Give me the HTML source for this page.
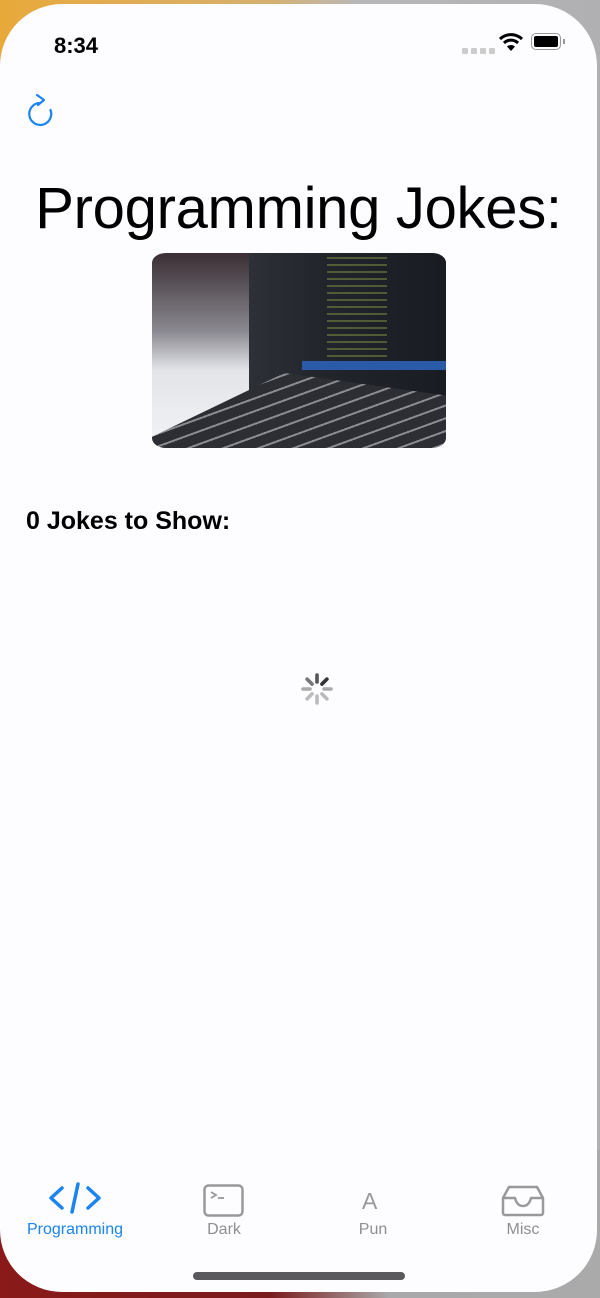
<!DOCTYPE html>
<html><head><style>
html,body{margin:0;padding:0;width:600px;height:1298px;overflow:hidden;font-family:"Liberation Sans",sans-serif}
body{background:linear-gradient(90deg,#e8a93a 0%,#d6b070 45%,#b8b8ba 60%,#b0b0b2 100%);position:relative}
.bot{position:absolute;left:0;top:1150px;width:600px;height:148px;background:linear-gradient(90deg,#8a1a1a 0%,#7a1c1c 45%,#a9a9ab 65%,#aaaaaa 100%)}
.phone{position:absolute;left:0;top:4px;width:597px;height:1288px;background:#fdfcff;border-radius:62px;overflow:hidden}
.time{position:absolute;left:54px;top:29px;font-size:22px;font-weight:bold;color:#000}
.title{position:absolute;left:0;width:597px;top:171px;text-align:center;font-size:58px;color:#000;letter-spacing:-0.3px}
.img{position:absolute;left:152px;top:249px;width:294px;height:195px;border-radius:14px/10px;overflow:hidden;background:linear-gradient(180deg,#3a2e34 0%,#8a8890 40%,#e2e4e8 60%,#f2f3f5 100%)}
.scr{position:absolute;left:97px;top:0;width:197px;height:150px;background:linear-gradient(90deg,#2e3038 0%,#22242c 40%,#1a1c24 100%)}
.kb{position:absolute;left:0;bottom:0;width:294px;height:75px;background:repeating-linear-gradient(160deg,#2c2e34 0 10px,#8a8c92 10px 12px);clip-path:polygon(0 85%,45% 0,100% 30%,100% 100%,0 100%)}
.h{position:absolute;left:26px;top:503px;font-size:25px;font-weight:bold;color:#000}
.tab{position:absolute;top:1217px;font-size:16px;color:#8e8e93;text-align:center;width:120px}
.home{position:absolute;left:193px;top:1268px;width:212px;height:8px;border-radius:4px;background:#5a5a5e}
</style></head><body>
<div class="bot"></div>
<div class="phone">
<div class="time">8:34</div>
<div style="position:absolute;left:462px;top:44px;width:36px;height:6px;display:flex;gap:3px"><span style="width:6px;height:6px;background:#ccc;border-radius:1px"></span><span style="width:6px;height:6px;background:#ccc;border-radius:1px"></span><span style="width:6px;height:6px;background:#ccc;border-radius:1px"></span><span style="width:6px;height:6px;background:#ccc;border-radius:1px"></span></div>
<svg style="position:absolute;left:498px;top:28px" width="26" height="20" viewBox="0 0 26 20"><path d="M2 7 A16 16 0 0 1 24 7" stroke="#000" stroke-width="3" fill="none"/><path d="M6 11 A10 10 0 0 1 20 11" stroke="#000" stroke-width="3" fill="none"/><path d="M13 19 L9 14.5 A6 6 0 0 1 17 14.5Z" fill="#000"/></svg>
<div style="position:absolute;left:531px;top:29px;width:30px;height:17px;border:1.5px solid #999;border-radius:5px;box-sizing:border-box;padding:2px"><div style="background:#000;width:100%;height:100%;border-radius:2px"></div></div>
<div style="position:absolute;left:563px;top:35px;width:2px;height:5px;background:#999"></div>
<svg style="position:absolute;left:24px;top:86px" width="36" height="40" viewBox="0 0 36 40"><path d="M20 14 A11 11 0 1 1 8 16" stroke="#1a84f0" stroke-width="2.2" fill="none" transform="rotate(40 16 25)"/><path d="M13 5 L20 10 L14 15" stroke="#1a84f0" stroke-width="2.2" fill="none" stroke-linecap="round" stroke-linejoin="round"/></svg>
<div class="title">Programming Jokes:</div>
<div class="img"><div class="scr"></div><div style="position:absolute;left:175px;top:4px;width:60px;height:100px;background:repeating-linear-gradient(180deg,#7a8a40 0 2px,transparent 2px 7px);opacity:.55"></div><div style="position:absolute;left:150px;top:108px;width:144px;height:9px;background:#2a5aa8"></div><div class="kb"></div></div>
<div class="h">0 Jokes to Show:</div>
<svg style="position:absolute;left:299px;top:667px" width="36" height="36" viewBox="-18 -18 36 36">
<g stroke-width="3.6" stroke-linecap="round">
<line x1="0" y1="-7" x2="0" y2="-14" stroke="#555" transform="rotate(0)"/>
<line x1="0" y1="-7" x2="0" y2="-14" stroke="#333" transform="rotate(45)"/>
<line x1="0" y1="-7" x2="0" y2="-14" stroke="#aaa" transform="rotate(90)"/>
<line x1="0" y1="-7" x2="0" y2="-14" stroke="#bbb" transform="rotate(135)"/>
<line x1="0" y1="-7" x2="0" y2="-14" stroke="#bbb" transform="rotate(180)"/>
<line x1="0" y1="-7" x2="0" y2="-14" stroke="#bbb" transform="rotate(225)"/>
<line x1="0" y1="-7" x2="0" y2="-14" stroke="#aaa" transform="rotate(270)"/>
<line x1="0" y1="-7" x2="0" y2="-14" stroke="#777" transform="rotate(315)"/>
</g></svg>
<svg style="position:absolute;left:48px;top:1178px" width="54" height="34" viewBox="0 0 54 34"><g stroke="#1a84f0" stroke-width="3.5" fill="none" stroke-linecap="round" stroke-linejoin="round"><path d="M14 6 L3 16 L14 26"/><path d="M40 6 L51 16 L40 26"/><path d="M30 2 L24 30"/></g></svg>
<svg style="position:absolute;left:203px;top:1180px" width="42" height="34" viewBox="0 0 42 34"><rect x="1.5" y="1.5" width="38" height="30" rx="4" stroke="#999" stroke-width="2.5" fill="none"/><path d="M8 8 L13 11 L8 14" stroke="#999" stroke-width="1.8" fill="none"/><path d="M15 14 H21" stroke="#999" stroke-width="1.8"/></svg>
<div style="position:absolute;left:362px;top:1184px;font-size:23px;color:#999">A</div>
<svg style="position:absolute;left:501px;top:1180px" width="44" height="34" viewBox="0 0 44 34"><path d="M2 14 L8 3 H36 L42 14 V29 a2 2 0 0 1 -2 2 H4 a2 2 0 0 1 -2 -2 Z M2 14 H14 Q16 22 22 22 Q28 22 30 14 H42" stroke="#999" stroke-width="2.5" fill="none" stroke-linejoin="round"/></svg>
<div class="tab" style="left:15px;color:#1a84f0">Programming</div>
<div class="tab" style="left:164px">Dark</div>
<div class="tab" style="left:313px">Pun</div>
<div class="tab" style="left:463px">Misc</div>
<div class="home"></div>
</div>
</body></html>
